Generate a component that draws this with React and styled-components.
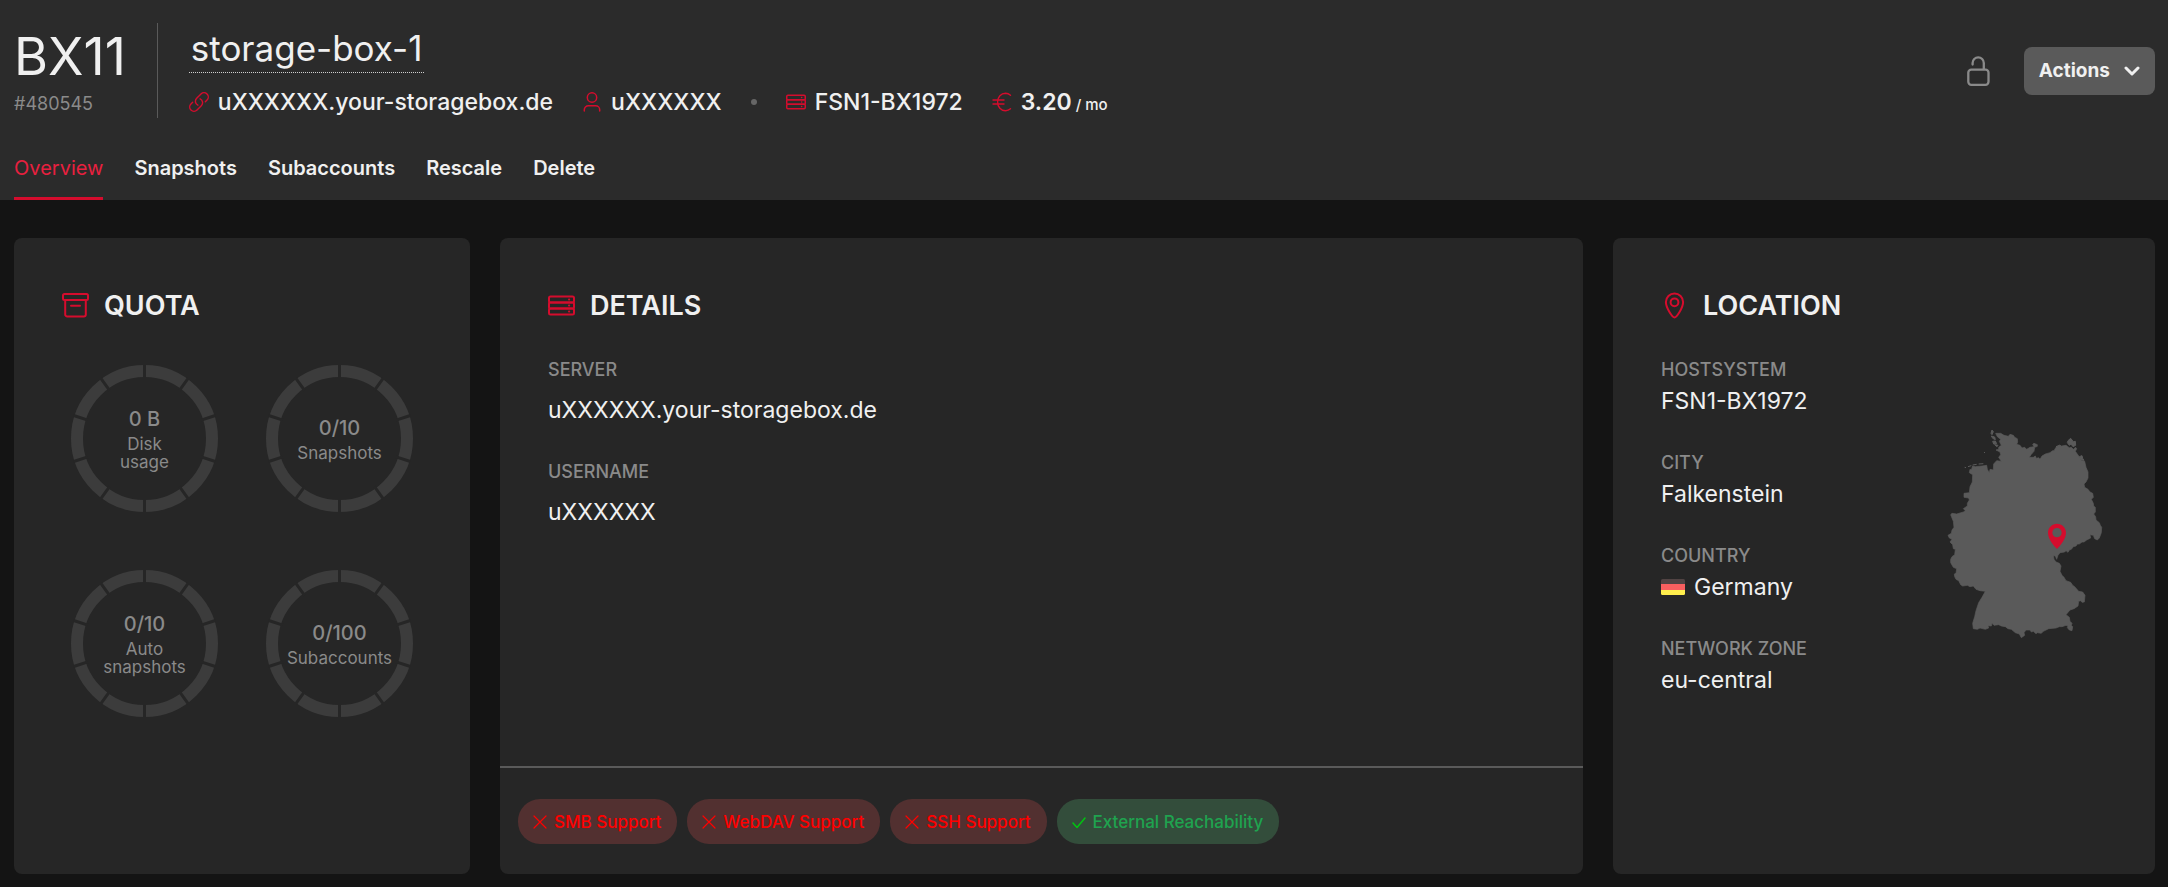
import React from "react";
import styled, { createGlobalStyle, css } from "styled-components";

const red = "#d50c2d";
const white = "#f0f0f0";
const grey = "#8a8a8a";
const cardBg = "#262626";

const GlobalStyle = createGlobalStyle`
  *, *::before, *::after { box-sizing: border-box; }
  body {
    margin: 0;
    background: #141414;
    color: ${white};
    font-family: Inter, "Open Sans", sans-serif;
  }
  h1, h2, p, dl, dt, dd, ul { margin: 0; padding: 0; }
  button { font-family: inherit; color: inherit; cursor: pointer; }
`;

const Page = styled.div`
  min-height: 100vh;
  display: flex;
  flex-direction: column;
`;

/* ---------- header ---------- */

const Header = styled.header`
  background: #2b2b2b;
  padding: 23px 13px 0 14px;
`;

const HeaderTop = styled.div`
  display: flex;
  align-items: stretch;
`;

const Product = styled.div`
  padding: 4px 31px 3px 0;
  border-right: 1px solid #5a5a5a;
`;

const ProductType = styled.p`
  font-size: 52px;
  line-height: 60px;
`;

const ProductId = styled.p`
  margin-top: 6px;
  font-size: 18px;
  line-height: 22px;
  color: ${grey};
`;

const Summary = styled.div`
  padding: 4px 0 0 31px;
  flex: 1;
`;

const Title = styled.h1`
  display: flex;
  font-weight: 400;
`;

const EditableName = styled.button`
  padding: 0 2px 3px;
  border: 0;
  border-bottom: 1px dotted #d0d0d0;
  background: none;
  font-size: 35px;
  line-height: 42px;
`;

const MetaList = styled.ul`
  display: flex;
  flex-wrap: wrap;
  align-items: center;
  gap: 0 29px;
  margin-top: 15px;
  list-style: none;
`;

const MetaItem = styled.li`
  display: flex;
  align-items: center;
  gap: 9px;
  font-size: 23px;
  line-height: 28px;
  font-weight: 500;
`;

const Dot = styled.li`
  width: 6px;
  height: 6px;
  border-radius: 50%;
  background: #666;
`;

const Price = styled.span`
  font-weight: 600;
`;

const PerMonth = styled.small`
  margin-left: 4px;
  font-size: 15px;
  line-height: 1;
  font-weight: 500;
`;

const HeaderActions = styled.div`
  display: flex;
  align-items: center;
  align-self: center;
  gap: 34px;
`;

const IconButton = styled.button`
  display: flex;
  padding: 0;
  border: 0;
  background: none;
  color: ${grey};
`;

const ActionsButton = styled.button`
  display: flex;
  align-items: center;
  gap: 14px;
  height: 48px;
  padding: 0 15px;
  border: 0;
  border-radius: 8px;
  background: #5a5a5a;
  font-size: 19px;
  font-weight: 700;
`;

const Tabs = styled.nav`
  display: flex;
  gap: 31px;
  margin-top: 26px;
`;

const Tab = styled.a`
  padding: 12px 0 17px;
  border-bottom: 3px solid transparent;
  font-size: 20px;
  line-height: 24px;
  font-weight: 600;
  color: ${white};
  text-decoration: none;
  ${({ $active }) =>
    $active &&
    css`
      border-color: ${red};
      color: #e8203f;
      font-weight: 400;
    `}
`;

/* ---------- cards ---------- */

const Cards = styled.main`
  flex: 1;
  display: grid;
  grid-template-columns: 456fr 1083fr 542fr;
  gap: 30px;
  padding: 38px 13px 13px 14px;
`;

const Card = styled.section`
  display: flex;
  flex-direction: column;
  border-radius: 8px;
  background: ${cardBg};
`;

const CardBody = styled.div`
  flex: 1;
  padding: 51px 48px 30px;
`;

const CardTitle = styled.h2`
  display: flex;
  align-items: center;
  gap: 15px;
  font-size: 27px;
  line-height: 33px;
  font-weight: 600;
  text-transform: uppercase;
`;

const Fields = styled.dl`
  display: grid;
  align-content: start;
  gap: 37px;
  padding-top: 37px;
`;

const Field = styled.div`
  display: grid;
  gap: ${({ $roomy }) => ($roomy ? "15px" : "6px")};
`;

const Label = styled.dt`
  font-size: 18px;
  line-height: 22px;
  font-weight: 500;
  text-transform: uppercase;
  color: ${grey};
`;

const Value = styled.dd`
  display: flex;
  align-items: center;
  gap: 9px;
  font-size: 23px;
  line-height: 28px;
`;

/* ---------- quota gauges ---------- */

const Gauges = styled.div`
  display: grid;
  grid-template-columns: repeat(2, 147px);
  justify-content: center;
  gap: 58px 48px;
  padding-top: 43px;
`;

const GaugeBox = styled.div`
  display: grid;
  place-items: center;
  height: 147px;
  > * { grid-area: 1 / 1; }
`;

const GaugeText = styled.div`
  display: flex;
  flex-direction: column;
  align-items: center;
  gap: 4px;
  color: ${grey};
  text-align: center;
`;

const GaugeValue = styled.span`
  font-size: 20px;
  line-height: 24px;
  font-weight: 500;
`;

const GaugeLabel = styled.span`
  width: min-content;
  font-size: 17px;
  line-height: 18px;
`;

/* ---------- feature chips ---------- */

const CardFooter = styled.footer`
  display: flex;
  flex-wrap: wrap;
  gap: 10px;
  padding: 31px 18px 30px;
  border-top: 2px solid #5a5a5a;
`;

const Chip = styled.span`
  display: flex;
  align-items: center;
  gap: 7px;
  height: 45px;
  padding: 0 16px 0 15px;
  border-radius: 22px;
  font-size: 17px;
  font-weight: 500;
  background: ${({ $on }) => ($on ? "#334d3b" : "#523030")};
  color: ${({ $on }) => ($on ? "#1fa34f" : "#ff0000")};
`;

/* ---------- location ---------- */

const LocationRow = styled.div`
  display: flex;
  justify-content: space-between;
  align-items: flex-start;
`;

const MapArea = styled.div`
  margin: 106px 3px 0 0;
`;

/* ---------- icons ---------- */

const Icon = ({ w = 20, h = w, box, sw = 1.5, children, color = red }) => (
  <svg width={w} height={h} viewBox={box || `0 0 ${w} ${h}`} fill="none" stroke={color}
    strokeWidth={sw} strokeLinecap="round" strokeLinejoin="round" aria-hidden="true">
    {children}
  </svg>
);

const LinkIcon = () => (
  <Icon box="1.5 1.5 21 21">
    <path d="M13.19 8.688a4.5 4.5 0 0 1 1.242 7.244l-4.5 4.5a4.5 4.5 0 0 1-6.364-6.364l1.757-1.757m13.35-.622 1.757-1.757a4.5 4.5 0 0 0-6.364-6.364l-4.5 4.5a4.5 4.5 0 0 0 1.242 7.244" />
  </Icon>
);

const UserIcon = () => (
  <Icon>
    <circle cx="10" cy="5.5" r="4.7" />
    <path d="M2.3 19v-1.2a4 4 0 0 1 4-4h7.4a4 4 0 0 1 4 4V19" />
  </Icon>
);

const ServerIcon = ({ w = 20, sw = 1.5 }) => (
  <Icon w={w} box="0 0 27 27" sw={sw}>
    <rect x="1" y="4.5" width="25" height="6" rx="1.5" />
    <rect x="1" y="10.5" width="25" height="6" rx="1" />
    <rect x="1" y="16.5" width="25" height="6" rx="1.5" />
    <path d="M21 7.5h.2M21 13.5h.2M21 19.5h.2" />
  </Icon>
);

const EuroIcon = () => (
  <Icon sw={1.4}>
    <path d="M18.5 3.2A8 8 0 0 0 13.5 1.2C9 1.2 5.6 5 5.6 10s3.4 8.8 7.9 8.8a8 8 0 0 0 5-2M1 8h11M1 12h11" />
  </Icon>
);

const ArchiveIcon = () => (
  <Icon w={27} sw={2}>
    <rect x="1" y="2" width="25" height="6" rx="1.5" />
    <path d="M3.2 8v14.5a2 2 0 0 0 2 2h16.6a2 2 0 0 0 2-2V8M9 13.8h9" />
  </Icon>
);

const PinIcon = () => (
  <Icon w={27} sw={2}>
    <path d="M13.5 25.5C11.5 25.5 4.9 16 4.9 10.1a8.6 8.6 0 0 1 17.2 0C22.1 16 15.5 25.5 13.5 25.5Z" />
    <circle cx="13.5" cy="10.3" r="3.9" />
  </Icon>
);

const UnlockIcon = () => (
  <Icon w={23} h={30} sw={2.3} color={grey}>
    <rect x="1.3" y="13.6" width="20.2" height="15.2" rx="3" />
    <path d="M5.6 8.6V7a5.6 5.6 0 0 1 11.2 0v6" />
  </Icon>
);

const ChevronIcon = () => (
  <Icon w={16} h={10} sw={3} color={white}>
    <path d="M2 2l6 6 6-6" />
  </Icon>
);

const CrossIcon = () => (
  <Icon w={14} sw={1.2} color="#ff0000">
    <path d="M1 1l12 12M13 1L1 13" />
  </Icon>
);

const CheckIcon = () => (
  <Icon w={14} sw={1.5} color="#00c410">
    <path d="M1 8l4 4.5L13 3" />
  </Icon>
);

const FlagGermany = () => (
  <svg width="24" height="16" viewBox="0 0 24 16" aria-hidden="true">
    <clipPath id="flag"><rect width="24" height="16" rx="1.5" /></clipPath>
    <g clipPath="url(#flag)">
      <rect width="24" height="6" fill="#514343" />
      <rect y="5" width="24" height="6" fill="#f95f5f" />
      <rect y="11" width="24" height="5" fill="#ffee4d" />
    </g>
  </svg>
);

const GermanyMap = () => (
  <svg width="159" height="211" viewBox="45 54 477 633" role="img" aria-label="Germany">
    <g fill="#5a5a5a" stroke="#5a5a5a" strokeWidth="2" strokeLinejoin="round">
      <path d="M197 70L212 70L222 76L235 79L240 73L250 76L254 82L262 86L263 96L260 103L270 106L276 114L284 112L290 118L300 112L312 110L308 103L312 100L322 104L322 109L314 112L312 124L303 134L298 142L310 142L316 138L319 145L326 143L330 148L336 138L346 132L360 128L368 122L372 122L378 112L395 108L408 106L418 113L424 112L430 118L437 112L440 116L436 124L446 138L456 152L464 154L468 172L474 186L474 204L468 216L462 222L464 232L474 238L480 246L488 250L490 262L484 268L490 280L491 288L496 292L496 306L491 312L497 320L498 330L508 338L511 346L515 352L514 368L508 384L502 390L494 386L490 376L480 374L482 384L470 390L462 396L456 396L448 402L442 402L438 408L430 410L424 418L418 420L414 427L408 422L404 426L390 428L384 436L380 448L376 438L370 437L372 448L378 456L388 460L393 468L390 484L396 496L402 502L408 512L422 517L428 526L434 530L446 544L458 546L465 556L463 576L456 577L452 572L446 574L444 588L432 596L420 600L408 614L418 622L420 634L426 640L424 646L428 650L426 662L418 660L412 653L414 648L408 646L396 650L388 650L378 654L356 656L340 664L334 670L322 668L318 671L310 664L304 666L300 660L288 660L282 668L284 676L274 683L268 672L256 668L244 658L234 656L226 650L214 648L206 644L192 646L186 640L184 648L174 647L176 654L166 658L150 654L142 658L130 656L128 640L134 620L138 602L146 578L156 562L166 544L150 542L138 538L130 528L120 530L112 526L98 528L92 524L86 512L78 508L74 500L73 492L78 490L80 476L70 472L62 458L62 448L66 440L74 434L76 418L70 416L68 404L60 396L66 388L58 384L54 376L64 370L66 360L72 352L70 334L62 314L66 310L80 312L100 306L106 302L100 296L112 288L112 280L118 270L116 264L102 262L102 250L118 248L120 230L127 216L128 194L118 188L120 178L124 180L128 168L136 170L156 168L170 166L172 178L178 188L180 178L190 180L191 162L200 152L214 154L206 142L212 134L210 126L198 120L206 118L206 112L214 106L208 94L212 88L202 80Z" />
      <path d="M186 60l4 5-4 9-3-4zM184 78l10 3 2 8-8-4zM188 94l8-1 4 8-9 1zM194 104l10 2-3 4zM104 172l4 1M114 170l10-3M128 165l12-2M146 162l14-1M162 127l3 1M414 92l8-7 8 10 6-1 1 12-8 4-6-8-5 4-6-8zM378 110l12-5 4 6zM448 140l8-3 2 8 4 6-8-2z" strokeWidth="3" />
    </g>
    <path fill={red} fillRule="evenodd" d="M381 341c15 0 27 12 27 27c0 19-17 38-27 49c-10-11-27-30-27-49c0-15 12-27 27-27Zm0 13a14 14 0 1 0 0 28a14 14 0 1 0 0-28Z" />
  </svg>
);

const gaugeCuts = [0, 36, 72, 108, 144];

const Gauge = ({ value, label }) => (
  <GaugeBox>
    <svg width="147" height="147" viewBox="0 0 147 147" fill="none" aria-hidden="true">
      <circle cx="73.5" cy="73.5" r="67.5" stroke="#3c3c3c" strokeWidth="12" />
      {gaugeCuts.map((a) => (
        <path key={a} d="M73.5 -1V14M73.5 133V148" stroke={cardBg} strokeWidth="3"
          transform={`rotate(${a} 73.5 73.5)`} />
      ))}
    </svg>
    <GaugeText>
      <GaugeValue>{value}</GaugeValue>
      <GaugeLabel>{label}</GaugeLabel>
    </GaugeText>
  </GaugeBox>
);

const tabs = ["Overview", "Snapshots", "Subaccounts", "Rescale", "Delete"];

const quotas = [
  { value: "0 B", label: "Disk usage" },
  { value: "0/10", label: "Snapshots" },
  { value: "0/10", label: "Auto snapshots" },
  { value: "0/100", label: "Subaccounts" },
];

const features = [
  { name: "SMB Support", on: false },
  { name: "WebDAV Support", on: false },
  { name: "SSH Support", on: false },
  { name: "External Reachability", on: true },
];

export default function App() {
  return (
    <Page>
      <GlobalStyle />
      <Header>
        <HeaderTop>
          <Product>
            <ProductType>BX11</ProductType>
            <ProductId>#480545</ProductId>
          </Product>
          <Summary>
            <Title>
              <EditableName type="button">storage-box-1</EditableName>
            </Title>
            <MetaList>
              <MetaItem><LinkIcon />uXXXXXX.your-storagebox.de</MetaItem>
              <MetaItem><UserIcon />uXXXXXX</MetaItem>
              <Dot aria-hidden="true" />
              <MetaItem><ServerIcon sw={2} />FSN1-BX1972</MetaItem>
              <MetaItem>
                <EuroIcon />
                <span><Price>3.20</Price><PerMonth>/ mo</PerMonth></span>
              </MetaItem>
            </MetaList>
          </Summary>
          <HeaderActions>
            <IconButton type="button" aria-label="Protection"><UnlockIcon /></IconButton>
            <ActionsButton type="button">Actions<ChevronIcon /></ActionsButton>
          </HeaderActions>
        </HeaderTop>
        <Tabs>
          {tabs.map((name, i) => (
            <Tab key={name} href={`#${name.toLowerCase()}`} $active={i === 0}
              aria-current={i === 0 ? "page" : undefined}>
              {name}
            </Tab>
          ))}
        </Tabs>
      </Header>

      <Cards>
        <Card>
          <CardBody>
            <CardTitle><ArchiveIcon />Quota</CardTitle>
            <Gauges>
              {quotas.map((q) => <Gauge key={q.label} {...q} />)}
            </Gauges>
          </CardBody>
        </Card>

        <Card>
          <CardBody>
            <CardTitle><ServerIcon w={27} sw={2} />Details</CardTitle>
            <Fields>
              <Field $roomy>
                <Label>Server</Label>
                <Value>uXXXXXX.your-storagebox.de</Value>
              </Field>
              <Field $roomy>
                <Label>Username</Label>
                <Value>uXXXXXX</Value>
              </Field>
            </Fields>
          </CardBody>
          <CardFooter>
            {features.map(({ name, on }) => (
              <Chip key={name} $on={on}>{on ? <CheckIcon /> : <CrossIcon />}{name}</Chip>
            ))}
          </CardFooter>
        </Card>

        <Card>
          <CardBody>
            <CardTitle><PinIcon />Location</CardTitle>
            <LocationRow>
              <Fields>
                <Field>
                  <Label>Hostsystem</Label>
                  <Value>FSN1-BX1972</Value>
                </Field>
                <Field>
                  <Label>City</Label>
                  <Value>Falkenstein</Value>
                </Field>
                <Field>
                  <Label>Country</Label>
                  <Value><FlagGermany />Germany</Value>
                </Field>
                <Field>
                  <Label>Network zone</Label>
                  <Value>eu-central</Value>
                </Field>
              </Fields>
              <MapArea><GermanyMap /></MapArea>
            </LocationRow>
          </CardBody>
        </Card>
      </Cards>
    </Page>
  );
}
